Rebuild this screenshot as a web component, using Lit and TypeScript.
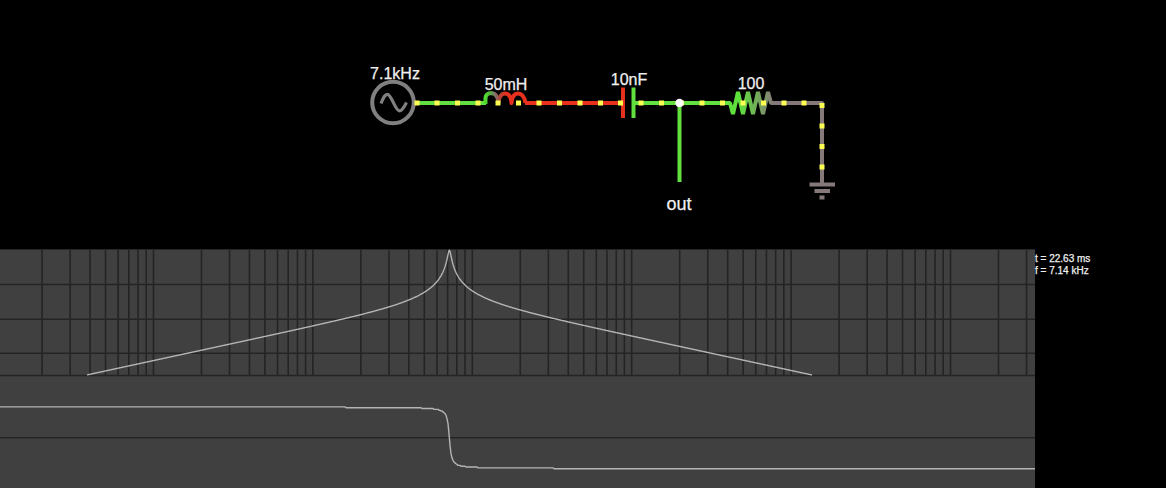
import { LitElement, html, svg, css } from "lit";
import { customElement } from "lit/decorators.js";

const SANS = css`"Liberation Sans", Arial, Helvetica, sans-serif`;

/* Series RLC values */
const R = 100;
const L = 50e-3;
const C = 10e-9;

/* Plot scales: one decade in x, 20 dB in y */
const DECADE = 159.4;
const X_1KHZ = 312.9;
const TRACE_SHIFT = 0.6;
const WIDTH = 1035;
const DB20 = 34.4;
const GAIN_TOP = 250.3;
const GAIN_BOTTOM = 375;
const PHASE_ZERO = 437.8;
const PHASE_90 = 30.7;
const PHASE_STEP = 0.8355;

const reactance = (x: number) => {
  const w = 2 * Math.PI * 1000 * 10 ** ((x - X_1KHZ - TRACE_SHIFT) / DECADE);
  return w * L - 1 / (w * C);
};

function gainPoints(): string {
  const pts: string[] = [];
  for (let x = 0; x <= WIDTH; x += 0.5) {
    const db = 20 * Math.log10(R / Math.hypot(R, reactance(x)));
    const y = GAIN_TOP - (db * DB20) / 20;
    if (y <= GAIN_BOTTOM) pts.push(`${x},${y.toFixed(2)}`);
  }
  return pts.join(" ");
}

function phasePoints(): string {
  const pts: string[] = [];
  for (let x = 0; x <= WIDTH; x += 1) {
    const dy = (Math.atan(reactance(x) / R) / (Math.PI / 2)) * PHASE_90;
    const y = PHASE_ZERO + Math.round(dy / PHASE_STEP) * PHASE_STEP;
    pts.push(`${x},${y.toFixed(2)}`);
  }
  return pts.join(" ");
}

function gridColumns(): number[] {
  const cols: number[] = [];
  for (let d = -2; d < 5; d++)
    for (let n = 1; n < 10; n++) {
      const x = X_1KHZ + DECADE * (d + Math.log10(n));
      if (x > 0 && x < WIDTH - 1) cols.push(x);
    }
  return cols;
}

@customElement("circuit-diagram")
export class CircuitDiagram extends LitElement {
  static styles = css`
    :host { display: block; }
    svg { display: block; width: 100%; height: auto; }
    .wire { fill: none; stroke-width: 4; stroke-linejoin: round; }
    .zigzag { stroke-linejoin: bevel; }
    .green { stroke: #62e03f; }
    .red { stroke: #e8301f; }
    .grey { stroke: #857878; }
    .source { fill: none; stroke: #808080; stroke-width: 4; }
    .sine { stroke-width: 3.2; }
    .dot { fill: #ffff52; }
    .node { fill: #fff; }
    .label { fill: #f0f0f0; stroke: #f0f0f0; stroke-width: 0.25; font: 16px ${SANS}; text-anchor: middle; }
    .out { font-size: 18px; }
  `;

  private dots: [number, number][] = [
    ...[417, 437, 457.5, 478, 498, 518.5, 539, 559.5, 580, 600.5, 620.5,
      641, 661.5, 681.5, 702, 722.5, 743, 763.5, 784, 804].map((x) => [x, 103] as [number, number]),
    ...[105.5, 126, 146.5, 167].map((y) => [822, y] as [number, number]),
  ];

  render() {
    return html`<svg viewBox="0 0 1166 249" role="img" aria-label="Series resonant circuit">
      <defs>
        <linearGradient id="coil" gradientUnits="userSpaceOnUse" x1="485" y1="0" x2="527" y2="0">
          <stop offset="0" stop-color="#4fe030" />
          <stop offset="0.14" stop-color="#55a844" />
          <stop offset="0.24" stop-color="#80706c" />
          <stop offset="0.36" stop-color="#b04438" />
          <stop offset="0.5" stop-color="#e8301f" />
        </linearGradient>
        <linearGradient id="fade" gradientUnits="userSpaceOnUse" x1="728" y1="0" x2="774" y2="0">
          <stop offset="0.25" stop-color="#5fe03c" />
          <stop offset="1" stop-color="#857878" />
        </linearGradient>
      </defs>

      <circle class="source" cx="393" cy="102.5" r="20.8" />
      <path class="source sine" d="M381 103.500C383.500 97 385 94.300 387.500 94.300C391.500 94.300 395 110.800 399.500 110.800C402.500 110.800 404 107 406.500 102.500" />

      <path class="wire green" d="M416 103H486" />
      <path class="wire" stroke="url(#coil)" d="M485.500 104V98C486 94.500 488.500 93 491.500 93C495.500 93.500 498 96 498.500 103C499 96 501 93.500 505 93.500C509 93.500 511 96 511.500 103C512 96 514 93.500 518 93.500C522 93.500 524.500 97 525.500 103" />
      <path class="wire red" d="M525 103H623M623 87.500V118" />
      <path class="wire green" d="M633.500 87.500V118M633.500 103H729M679.500 103V182" />
      <path class="wire zigzag" stroke="url(#fade)" d="M728 103H730L733 114L738 92L743 114L748 92L753 114L758 92L763 114L768 92L771 103H774" />
      <path class="wire grey" d="M772 103H822V184M809.500 184.500H835M814.500 191H830M819.500 197.500H824.500" />

      ${this.dots.map(([x, y]) => svg`<rect class="dot" x=${x - 2.5} y=${y - 2.5} width="5" height="5" />`)}
      <circle class="node" cx="679.5" cy="103" r="4.2" />

      <text class="label" x="395" y="79">7.1kHz</text>
      <text class="label" x="506" y="90">50mH</text>
      <text class="label" x="629" y="85">10nF</text>
      <text class="label" x="751" y="89">100</text>
      <text class="label out" x="679" y="210">out</text>
    </svg>`;
  }
}

@customElement("bode-plot")
export class BodePlot extends LitElement {
  static styles = css`
    :host { display: block; background: #404040; }
    svg { display: block; width: 100%; height: auto; }
    .edge { stroke: #262626; stroke-width: 1; }
    .grid { stroke: #242424; stroke-width: 1.6; }
    .trace { fill: none; stroke: #b4b4b4; stroke-width: 1.4; stroke-linejoin: round; }
  `;

  render() {
    return html`<svg viewBox="0 249 1035 239" role="img" aria-label="Gain and phase against frequency">
      <line class="edge" x1="0" x2="1035" y1="249.500" y2="249.500" />
      ${gridColumns().map((x) => svg`<line class="grid" x1=${x} x2=${x} y1="250" y2="375.500" />`)}
      ${[284.5, 319.3, 353.3, 375.5, 437.8].map((y) => svg`<line class="grid" x1="0" x2="1035" y1=${y} y2=${y} />`)}
      <polyline class="trace" points=${gainPoints()} />
      <polyline class="trace" points=${phasePoints()} />
    </svg>`;
  }
}

@customElement("app-root")
export class AppRoot extends LitElement {
  static styles = css`
    :host { display: block; min-height: 100vh; background: #000; }
    .scope { display: grid; grid-template-columns: 1035fr 131fr; }
    .readout {
      padding-top: 4px;
      color: #f0f0f0;
      font: 10px/12px ${SANS};
      -webkit-text-stroke: 0.25px #f0f0f0;
      white-space: nowrap;
    }
    .line { margin: 0; }
  `;

  render() {
    return html`<main>
      <circuit-diagram></circuit-diagram>
      <section class="scope">
        <bode-plot></bode-plot>
        <div class="readout">
          <p class="line">t = 22.63 ms</p>
          <p class="line">f = 7.14 kHz</p>
        </div>
      </section>
    </main>`;
  }
}
